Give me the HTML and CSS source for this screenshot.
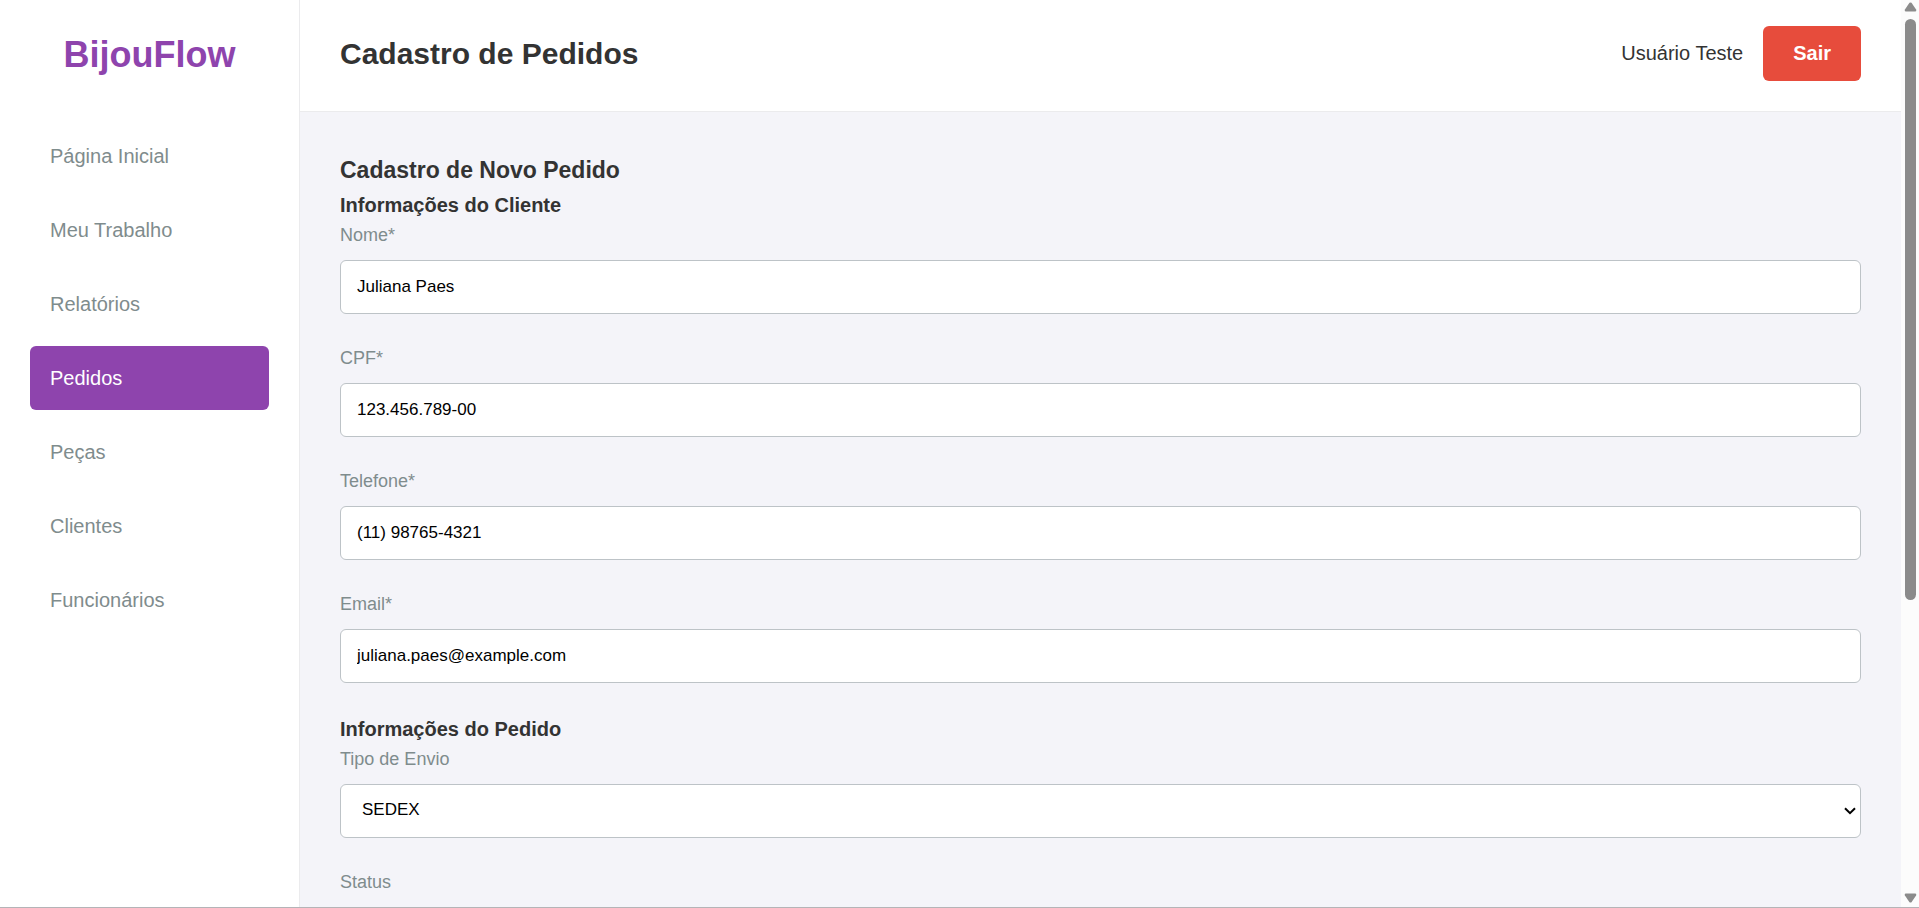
FILE: index.html
```html
<!DOCTYPE html>
<html lang="pt-BR">
<head>
<meta charset="utf-8">
<meta name="viewport" content="width=device-width, initial-scale=1">
<title>BijouFlow - Cadastro de Pedidos</title>
<link rel="stylesheet" href="styles.css">
</head>
<body>
<div class="app">
  <aside class="sidebar">
    <div class="logo">BijouFlow</div>
    <nav class="nav">
      <a class="nav-link" href="#inicio">Página Inicial</a>
      <a class="nav-link" href="#trabalho">Meu Trabalho</a>
      <a class="nav-link" href="#relatorios">Relatórios</a>
      <a class="nav-link active" href="#pedidos" aria-current="page">Pedidos</a>
      <a class="nav-link" href="#pecas">Peças</a>
      <a class="nav-link" href="#clientes">Clientes</a>
      <a class="nav-link" href="#funcionarios">Funcionários</a>
    </nav>
  </aside>
  <div class="content">
    <header class="topbar">
      <h1 class="page-title">Cadastro de Pedidos</h1>
      <div class="user">
        <span class="user-name">Usuário Teste</span>
        <button class="logout" type="button">Sair</button>
      </div>
    </header>
    <main class="main">
      <h2 class="form-title">Cadastro de Novo Pedido</h2>
      <form class="form">
        <section class="group">
          <h3 class="group-title">Informações do Cliente</h3>
          <div class="field">
            <label class="label" for="nome">Nome*</label>
            <input class="control" id="nome" type="text" value="Juliana Paes">
          </div>
          <div class="field">
            <label class="label" for="cpf">CPF*</label>
            <input class="control" id="cpf" type="text" value="123.456.789-00">
          </div>
          <div class="field">
            <label class="label" for="telefone">Telefone*</label>
            <input class="control" id="telefone" type="tel" value="(11) 98765-4321">
          </div>
          <div class="field">
            <label class="label" for="email">Email*</label>
            <input class="control" id="email" type="email" value="juliana.paes@example.com">
          </div>
        </section>
        <section class="group">
          <h3 class="group-title">Informações do Pedido</h3>
          <div class="field">
            <label class="label" for="envio">Tipo de Envio</label>
            <div class="select">
              <select class="control" id="envio"><option>SEDEX</option></select>
              <svg class="chevron" width="12" height="8" viewBox="0 0 12 8" aria-hidden="true"><path d="M1 1.2L6 6.2L11 1.2"/></svg>
            </div>
          </div>
          <div class="field">
            <label class="label" for="status">Status</label>
            <div class="select">
              <select class="control" id="status"></select>
              <svg class="chevron" width="12" height="8" viewBox="0 0 12 8" aria-hidden="true"><path d="M1 1.2L6 6.2L11 1.2"/></svg>
            </div>
          </div>
        </section>
      </form>
    </main>
  </div>
  <div class="scrollbar" aria-hidden="true">
    <svg class="arrow" width="13" height="10" viewBox="0 0 12 10"><path d="M5 .8Q6 0 7 .8L11.6 7.5Q12.3 9.5 10.8 9.5H1.2Q-.3 9.5.4 7.5Z"/></svg>
    <div class="track"><div class="thumb"></div></div>
    <svg class="arrow" width="13" height="10" viewBox="0 0 12 10"><path d="M5 9.2Q6 10 7 9.2L11.6 2.5Q12.3.5 10.8.5H1.2Q-.3.5.4 2.5Z"/></svg>
  </div>
</div>
</body>
</html>
```

FILE: styles.css
```css
* {
  box-sizing: border-box;
}

body,
h1,
h2,
h3 {
  margin: 0;
}

body {
  font-family: "Liberation Sans", Arial, sans-serif;
  color: #333;
  background: #f4f4f9;
  overflow: hidden;
}

.app {
  display: flex;
  height: 100vh;
  overflow: hidden;
  border-bottom: 1px solid #b4b4b7;
}

.sidebar {
  flex: 0 0 300px;
  padding: 34px 30px;
  background: #fff;
  border-right: 1px solid #ebebed;
}

.logo {
  margin-bottom: 48px;
  font-size: 36px;
  font-weight: bold;
  line-height: 42px;
  text-align: center;
  color: #8e44ad;
}

.nav {
  display: flex;
  flex-direction: column;
  gap: 10px;
}

.nav-link {
  padding: 20px;
  border-radius: 6px;
  font-size: 20px;
  line-height: 24px;
  color: #7f8c8d;
  text-decoration: none;
}

.nav-link.active {
  background: #8e44ad;
  color: #fff;
}

.content {
  flex: 1;
  min-width: 0;
}

.topbar {
  display: flex;
  align-items: center;
  justify-content: space-between;
  padding: 26px 40px 30px;
  background: #fff;
  border-bottom: 1px solid #ebebed;
}

.page-title {
  font-size: 30px;
  line-height: 36px;
}

.user {
  display: flex;
  align-items: center;
  gap: 20px;
  font-size: 20px;
}

.logout {
  padding: 15px 30px 16px;
  border: 0;
  border-radius: 6px;
  background: #e74c3c;
  color: #fff;
  font: bold 20px/24px "Liberation Sans", Arial, sans-serif;
}

.main {
  padding: 44px 40px;
}

.form-title {
  margin-bottom: 10px;
  font-size: 23px;
  line-height: 28px;
}

.form {
  display: flex;
  flex-direction: column;
  gap: 35px;
}

.group-title {
  margin-bottom: 8px;
  font-size: 20px;
  line-height: 23px;
}

.field {
  display: flex;
  flex-direction: column;
  gap: 14px;
}

.field + .field {
  margin-top: 34px;
}

.label {
  font-size: 18px;
  line-height: 21px;
  color: #7f8c8d;
}

.control {
  display: block;
  width: 100%;
  height: 54px;
  padding: 0 16px;
  border: 1px solid #bdc3c7;
  border-radius: 6px;
  background: #fff;
  color: #000;
  font: 17px/20px "Liberation Sans", Arial, sans-serif;
}

.select {
  position: relative;
}

.select .control {
  appearance: none;
  padding: 0 24px 2px 21px;
}

.chevron {
  position: absolute;
  top: 23px;
  right: 5px;
  fill: none;
  stroke: #000;
  stroke-width: 2;
  pointer-events: none;
}

.scrollbar {
  display: flex;
  flex: 0 0 18px;
  flex-direction: column;
  align-items: center;
  gap: 7px;
  padding: 2px 0 4px;
  background: #fcfcfc;
}

.arrow {
  flex: none;
  fill: #8b8b8b;
}

.track {
  flex: 1;
}

.thumb {
  width: 11px;
  height: 67%;
  border-radius: 6px;
  background: #8b8b8b;
}
```
